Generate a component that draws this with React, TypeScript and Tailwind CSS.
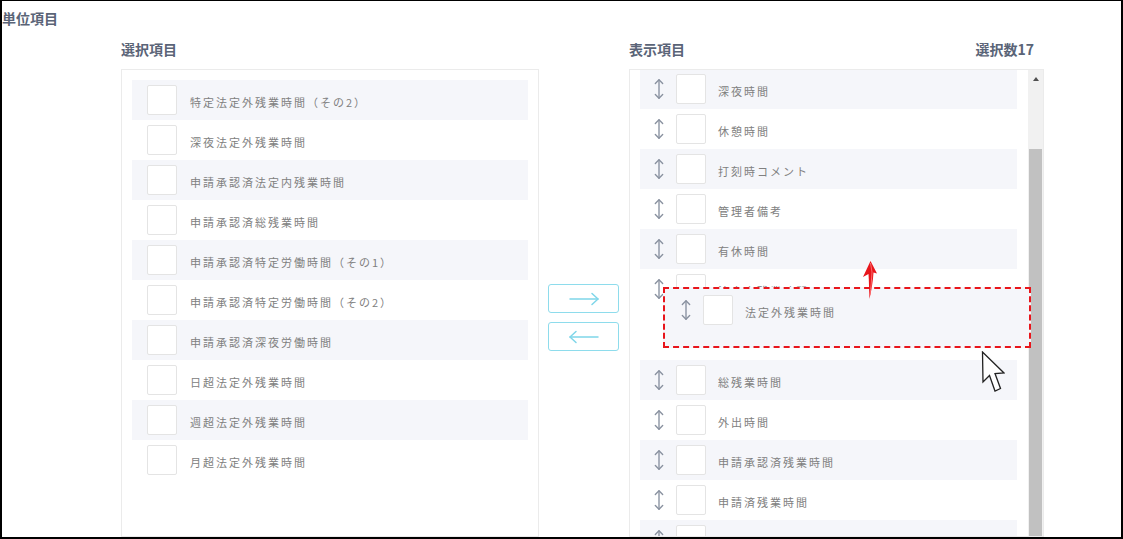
import { MoveVertical } from "lucide-react";

const font = { fontFamily: '"Noto Sans CJK JP", "Noto Sans", sans-serif' };

const leftItems = [
  "特定法定外残業時間（その2）",
  "深夜法定外残業時間",
  "申請承認済法定内残業時間",
  "申請承認済総残業時間",
  "申請承認済特定労働時間（その1）",
  "申請承認済特定労働時間（その2）",
  "申請承認済深夜労働時間",
  "日超法定外残業時間",
  "週超法定外残業時間",
  "月超法定外残業時間",
];

const rightTop = ["深夜時間", "休憩時間", "打刻時コメント", "管理者備考", "有休時間", "法定内残業時間"];
const rightBottom = ["総残業時間", "外出時間", "申請承認済残業時間", "申請済残業時間", "法定休日労働時間"];

function Box() {
  return <div className="w-[30px] h-[30px] shrink-0 bg-white border border-[#e4e4e4] rounded-[2px]" />;
}

function Label({ text }: { text: string }) {
  return <span className="text-[11px] tracking-[2px] text-[#808080] whitespace-nowrap">{text}</span>;
}

function LeftRow({ text, idx }: { text: string; idx: number }) {
  return (
    <div className={`h-[40px] flex items-center ${idx % 2 === 0 ? "bg-[#f5f6fa]" : ""}`}>
      <div className="ml-[15px]">
        <Box />
      </div>
      <div className="ml-[13px]">
        <Label text={text} />
      </div>
    </div>
  );
}

function RightRow({ text, gray }: { text: string; gray: boolean }) {
  return (
    <div className={`h-[40px] flex items-center ${gray ? "bg-[#f5f6fa]" : ""}`}>
      <MoveVertical size={22} strokeWidth={1.5} className="ml-[8px] text-[#8a92a0]" />
      <div className="ml-[6px]">
        <Box />
      </div>
      <div className="ml-[12px]">
        <Label text={text} />
      </div>
    </div>
  );
}

function ArrowBtn({ dir }: { dir: "right" | "left" }) {
  return (
    <button className="w-[71px] h-[29px] border border-[#8edcec] rounded-[3px] bg-white flex items-center justify-center">
      <svg width="32" height="14" viewBox="0 0 32 14" fill="none" stroke="#7fd6e9" strokeWidth="1.5" strokeLinecap="round" strokeLinejoin="round">
        {dir === "right" ? (
          <>
            <path d="M2 7h28" />
            <path d="M24 1.5 30 7l-6 5.5" />
          </>
        ) : (
          <>
            <path d="M30 7H2" />
            <path d="M8 1.5 2 7l6 5.5" />
          </>
        )}
      </svg>
    </button>
  );
}

export default function App() {
  return (
    <div
      className="w-[1123px] h-[539px] overflow-hidden bg-white border-black border-t border-l-2 border-r-2 border-b-2 flex flex-col"
      style={font}
    >
      <div className="h-[37px] pt-[4px] shrink-0">
        <span className="text-[14px] leading-[20px] font-bold text-[#5a6477]">単位項目</span>
      </div>
      <div className="flex ml-[119px] flex-1 min-h-0">
        {/* left column */}
        <div className="w-[418px] flex flex-col">
          <div className="h-[32px] pt-[1px] text-[14px] leading-[20px] font-bold text-[#5a6477]">選択項目</div>
          <div className="h-[480px] border border-[#ebebeb] p-[10px]">
            {leftItems.map((t, i) => (
              <LeftRow key={t} text={t} idx={i} />
            ))}
          </div>
        </div>

        {/* buttons */}
        <div className="ml-[9px] w-[71px] flex flex-col gap-[9px] pt-[246px]">
          <ArrowBtn dir="right" />
          <ArrowBtn dir="left" />
        </div>

        {/* right column */}
        <div className="ml-[10px] w-[415px] flex flex-col">
          <div className="h-[32px] pt-[1px] pr-[10px] flex justify-between text-[14px] leading-[20px] font-bold text-[#5a6477]">
            <span>表示項目</span>
            <span>選択数17</span>
          </div>
          <div className="relative h-[480px] border border-[#ebebeb] flex overflow-hidden">
            <div className="ml-[10px] w-[377px] -mt-[1px]">
              {rightTop.map((t, i) => (
                <RightRow key={t} text={t} gray={i % 2 === 0} />
              ))}
              <div className="h-[51px]" />
              {rightBottom.map((t, i) => (
                <RightRow key={t} text={t} gray={i % 2 === 0} />
              ))}
            </div>
            {/* scrollbar */}
            <div className="ml-auto w-[15px] bg-[#f1f1f1] flex flex-col">
              <div className="h-[17px] flex items-center justify-center">
                <div className="w-0 h-0 border-l-[3.5px] border-r-[3.5px] border-b-[4px] border-l-transparent border-r-transparent border-b-[#505050]" />
              </div>
              <div className="mt-[62px] mx-[1px] flex-1 bg-[#c1c1c1]" />
            </div>

            {/* dragged item */}
            <div className="absolute left-[33px] top-[217px] w-[368px] h-[61px] border-2 border-dashed border-[#e8151b] bg-[#f5f6fa]">
              <div className="mt-[1px] pl-[2px]">
                <RightRow text="法定外残業時間" gray={false} />
              </div>
            </div>

            {/* red arrow */}
            <svg className="absolute left-[231px] top-[190px]" width="17" height="40" viewBox="0 0 17 40">
              <path
                d="M9.5 1 L16 13.5 L12.5 12.5 C12 21 10.5 30 8.5 39 C8 30 8 21 7.5 14 L2 17 Z"
                fill="#e8151b"
              />
              <path d="M9.5 3 L11 12 C10.5 20 10 28 9 35" stroke="#ff7676" strokeWidth="0.9" fill="none" />
            </svg>

            {/* cursor */}
            <svg className="absolute left-[351px] top-[281px]" width="24" height="42" viewBox="0 0 24 42">
              <path
                d="M1.5 1 L2 31 L8.5 24.5 L14 40 L19.5 37.5 L14 22.5 L23 22 Z"
                fill="#fff"
                stroke="#222"
                strokeWidth="1.3"
                strokeLinejoin="miter"
              />
            </svg>
          </div>
        </div>
      </div>
    </div>
  );
}
